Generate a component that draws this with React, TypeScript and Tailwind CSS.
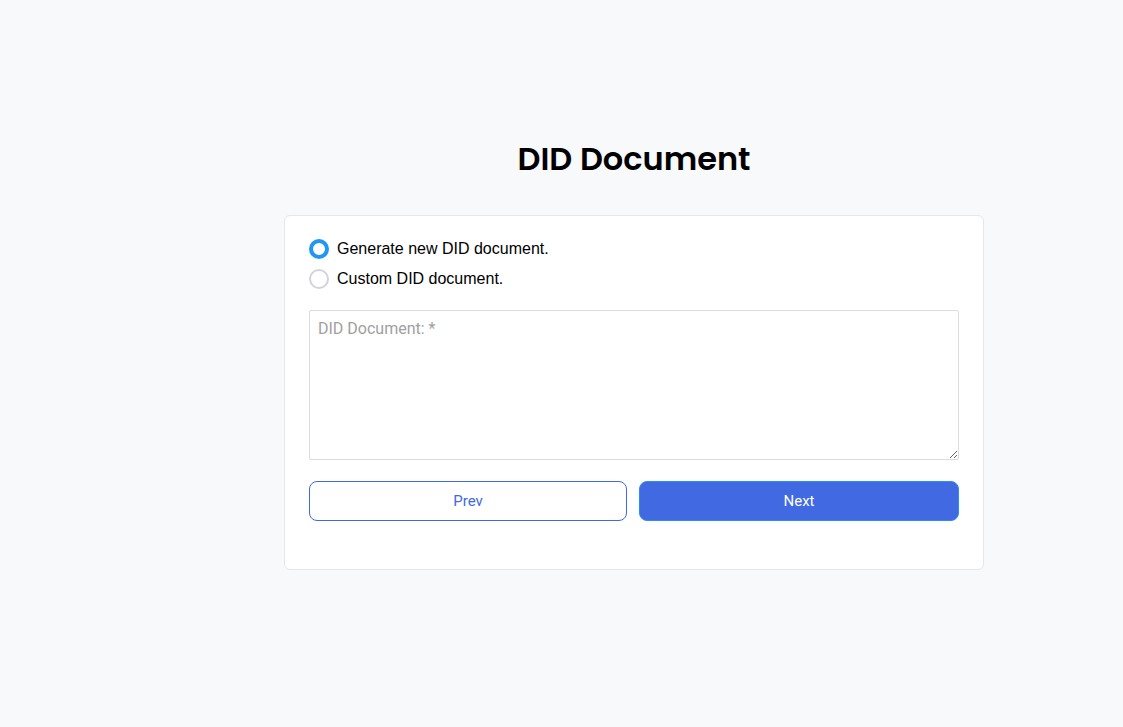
import React, { useState } from "react";

export default function App() {
  const [choice, setChoice] = useState<"gen" | "custom">("gen");
  return (
    <div className="min-h-screen w-full bg-[#f8f9fb] flex" style={{ minHeight: 727 }}>
      <div className="w-[145px] shrink-0" />
      <div className="flex-1 flex flex-col items-center pt-[139px]">
        <h1 className="text-[32px] leading-[40px] font-semibold text-black font-['Poppins','Inter',sans-serif] mb-[36px]">
          DID Document
        </h1>
        <div className="w-[700px] bg-white border border-[#e5e7eb] rounded-[6px] px-[24px] pt-[18px] pb-[48px]">
          <div className="flex flex-col font-['Liberation_Sans',Arial,sans-serif] text-[16px] text-black">
            <label className="flex items-center h-[30px] gap-[8px] cursor-pointer" onClick={() => setChoice("gen")}>
              <span
                className={
                  choice === "gen"
                    ? "w-[20px] h-[20px] rounded-full border-[4px] border-[#2196f3] bg-white"
                    : "w-[20px] h-[20px] rounded-full border-[2px] border-[#d1d5db] bg-white"
                }
              />
              <span>Generate new DID document.</span>
            </label>
            <label className="flex items-center h-[30px] gap-[8px] cursor-pointer" onClick={() => setChoice("custom")}>
              <span
                className={
                  choice === "custom"
                    ? "w-[20px] h-[20px] rounded-full border-[4px] border-[#2196f3] bg-white"
                    : "w-[20px] h-[20px] rounded-full border-[2px] border-[#d1d5db] bg-white"
                }
              />
              <span>Custom DID document.</span>
            </label>
          </div>
          <textarea
            placeholder="DID Document: *"
            className="mt-[16px] block w-full h-[150px] border border-[#dcdcdc] rounded-[2px] px-[8px] py-[6px] text-[16px] font-['Roboto',sans-serif] text-black placeholder:text-[#a0a0a0] outline-none"
          />
          <div className="mt-[21px] flex gap-[12px] font-['Roboto',sans-serif] text-[15px] font-normal">
            <button className="w-[318px] h-[40px] rounded-[8px] border border-[#4169e1] bg-white text-[#4169e1]">Prev</button>
            <button className="flex-1 h-[40px] rounded-[8px] border border-[#2b8ff0] bg-[#4169e1] text-white">Next</button>
          </div>
        </div>
      </div>
    </div>
  );
}
